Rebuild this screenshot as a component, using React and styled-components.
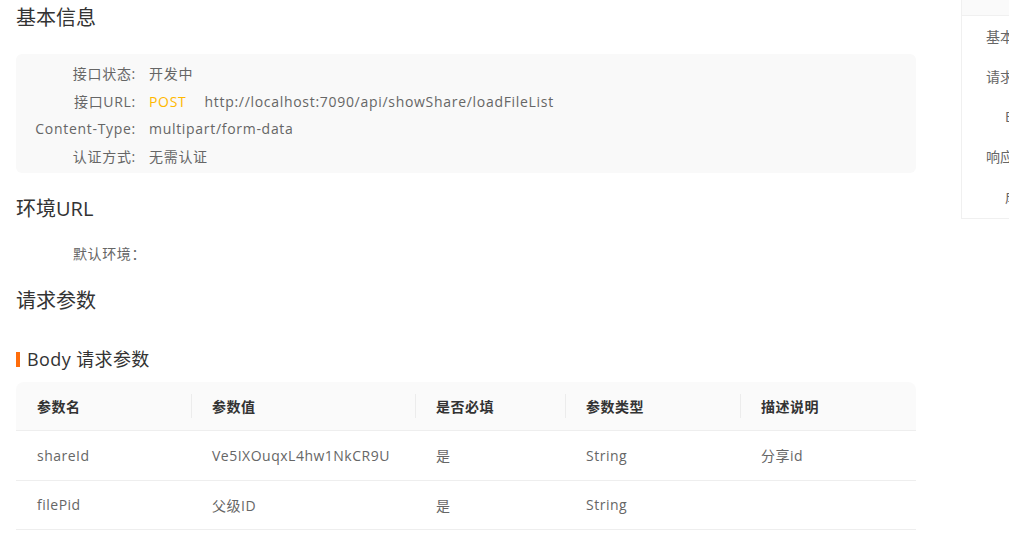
import React from 'react';
import styled, { createGlobalStyle } from 'styled-components';

const GlobalStyle = createGlobalStyle`
  html, body {
    margin: 0;
    padding: 0;
    background: #fff;
    overflow: hidden;
  }
  body {
    font-family: "Open Sans", "Noto Sans CJK SC", sans-serif;
    color: #666;
  }
`;

const Page = styled.div`
  display: flex;
  align-items: flex-start;
  width: 1009px;
  height: 535px;
  overflow: hidden;
`;

const Main = styled.div`
  width: 900px;
  margin-left: 16px;
  flex-shrink: 0;
`;

const Heading = styled.h2`
  margin: ${p => p.$top || 0}px 0 0;
  font-size: 20px;
  font-weight: 400;
  line-height: 36px;
  color: #333;
`;

const InfoBox = styled.div`
  margin-top: 18px;
  padding: 6px 0 3px;
  background: #f9f9f9;
  border-radius: 6px;
`;

const InfoRow = styled.div`
  display: flex;
  font-size: 14px;
  line-height: 27.5px;
  letter-spacing: 0.7px;
`;

const Label = styled.span`
  width: 120px;
  text-align: right;
  color: #666;
`;

const Value = styled.span`
  margin-left: 13px;
  color: #666;
`;

const Method = styled.span`
  color: #ffb800;
  margin-right: 18px;
`;

const EnvRow = styled.div`
  margin-top: 13px;
  padding-left: 57px;
  font-size: 14px;
  line-height: 27px;
  letter-spacing: 0.6px;
  color: #666;
`;

const SubTitle = styled.h3`
  margin: 26px 0 0;
  display: flex;
  align-items: center;
  gap: 7px;
  font-size: 18px;
  font-weight: 400;
  line-height: 28px;
  color: #333;
  letter-spacing: 0.4px;
  &::before {
    content: '';
    width: 4px;
    height: 15px;
    background: #ff6d0b;
  }
`;

const Table = styled.div`
  margin-top: 9px;
  display: grid;
  grid-template-columns: 175px 224px 150px 175px 176px;
  font-size: 14px;
  letter-spacing: 0.5px;
`;

const HeadCell = styled.div`
  position: relative;
  height: 48px;
  display: flex;
  align-items: center;
  padding-left: 21px;
  background: #fafafa;
  font-weight: 700;
  color: #333;
  border-bottom: 1px solid #eee;
  border-top-left-radius: ${p => (p.$first ? '8px' : 0)};
  border-top-right-radius: ${p => (p.$last ? '8px' : 0)};
  &::before {
    content: '';
    display: ${p => (p.$first ? 'none' : 'block')};
    position: absolute;
    left: 0;
    top: 12px;
    width: 1px;
    height: 24px;
    background: #ececec;
  }
`;

const Cell = styled.div`
  height: 48.5px;
  display: flex;
  align-items: center;
  padding-left: 21px;
  color: #666;
  border-bottom: 1px solid #eee;
`;

const Sidebar = styled.div`
  margin-left: 45px;
  width: 160px;
  flex-shrink: 0;
  border: 1px solid #f0f0f0;
  border-top: none;
  background: #fff;
`;

const SideHead = styled.div`
  height: 15px;
  background: #fafafa;
  border-bottom: 1px solid #f0f0f0;
`;

const SideList = styled.div`
  padding: 1px 0 1px;
`;

const SideItem = styled.div`
  padding-left: ${p => (p.$level === 2 ? 43 : 24)}px;
  font-size: 14px;
  line-height: 40px;
  color: #666;
  white-space: nowrap;
`;

const info = [
  ['接口状态:', '开发中'],
  ['接口URL:', null],
  ['Content-Type:', 'multipart/form-data'],
  ['认证方式:', '无需认证'],
];

const columns = ['参数名', '参数值', '是否必填', '参数类型', '描述说明'];

const rows = [
  ['shareId', 'Ve5IXOuqxL4hw1NkCR9U', '是', 'String', '分享id'],
  ['filePid', '父级ID', '是', 'String', ''],
];

const outline = [
  ['基本信息', 1],
  ['请求参数', 1],
  ['Body 请求参数', 2],
  ['响应示例', 1],
  ['成功响应示例', 2],
];

export default function App() {
  return (
    <>
      <GlobalStyle />
      <Page>
        <Main>
          <Heading>基本信息</Heading>
          <InfoBox>
            {info.map(([label, value]) => (
              <InfoRow key={label}>
                <Label>{label}</Label>
                <Value>
                  {value === null ? (
                    <>
                      <Method>POST</Method>
                      http://localhost:7090/api/showShare/loadFileList
                    </>
                  ) : (
                    value
                  )}
                </Value>
              </InfoRow>
            ))}
          </InfoBox>

          <Heading $top={18}>环境URL</Heading>
          <EnvRow>默认环境：</EnvRow>

          <Heading $top={16}>请求参数</Heading>
          <SubTitle>Body 请求参数</SubTitle>
          <Table>
            {columns.map((c, i) => (
              <HeadCell key={c} $first={i === 0} $last={i === columns.length - 1}>
                {c}
              </HeadCell>
            ))}
            {rows.map((r) =>
              r.map((v, i) => <Cell key={r[0] + i}>{v}</Cell>)
            )}
          </Table>
        </Main>
        <Sidebar>
          <SideHead />
          <SideList>
            {outline.map(([t, l]) => (
              <SideItem key={t} $level={l}>
                {t}
              </SideItem>
            ))}
          </SideList>
        </Sidebar>
      </Page>
    </>
  );
}
